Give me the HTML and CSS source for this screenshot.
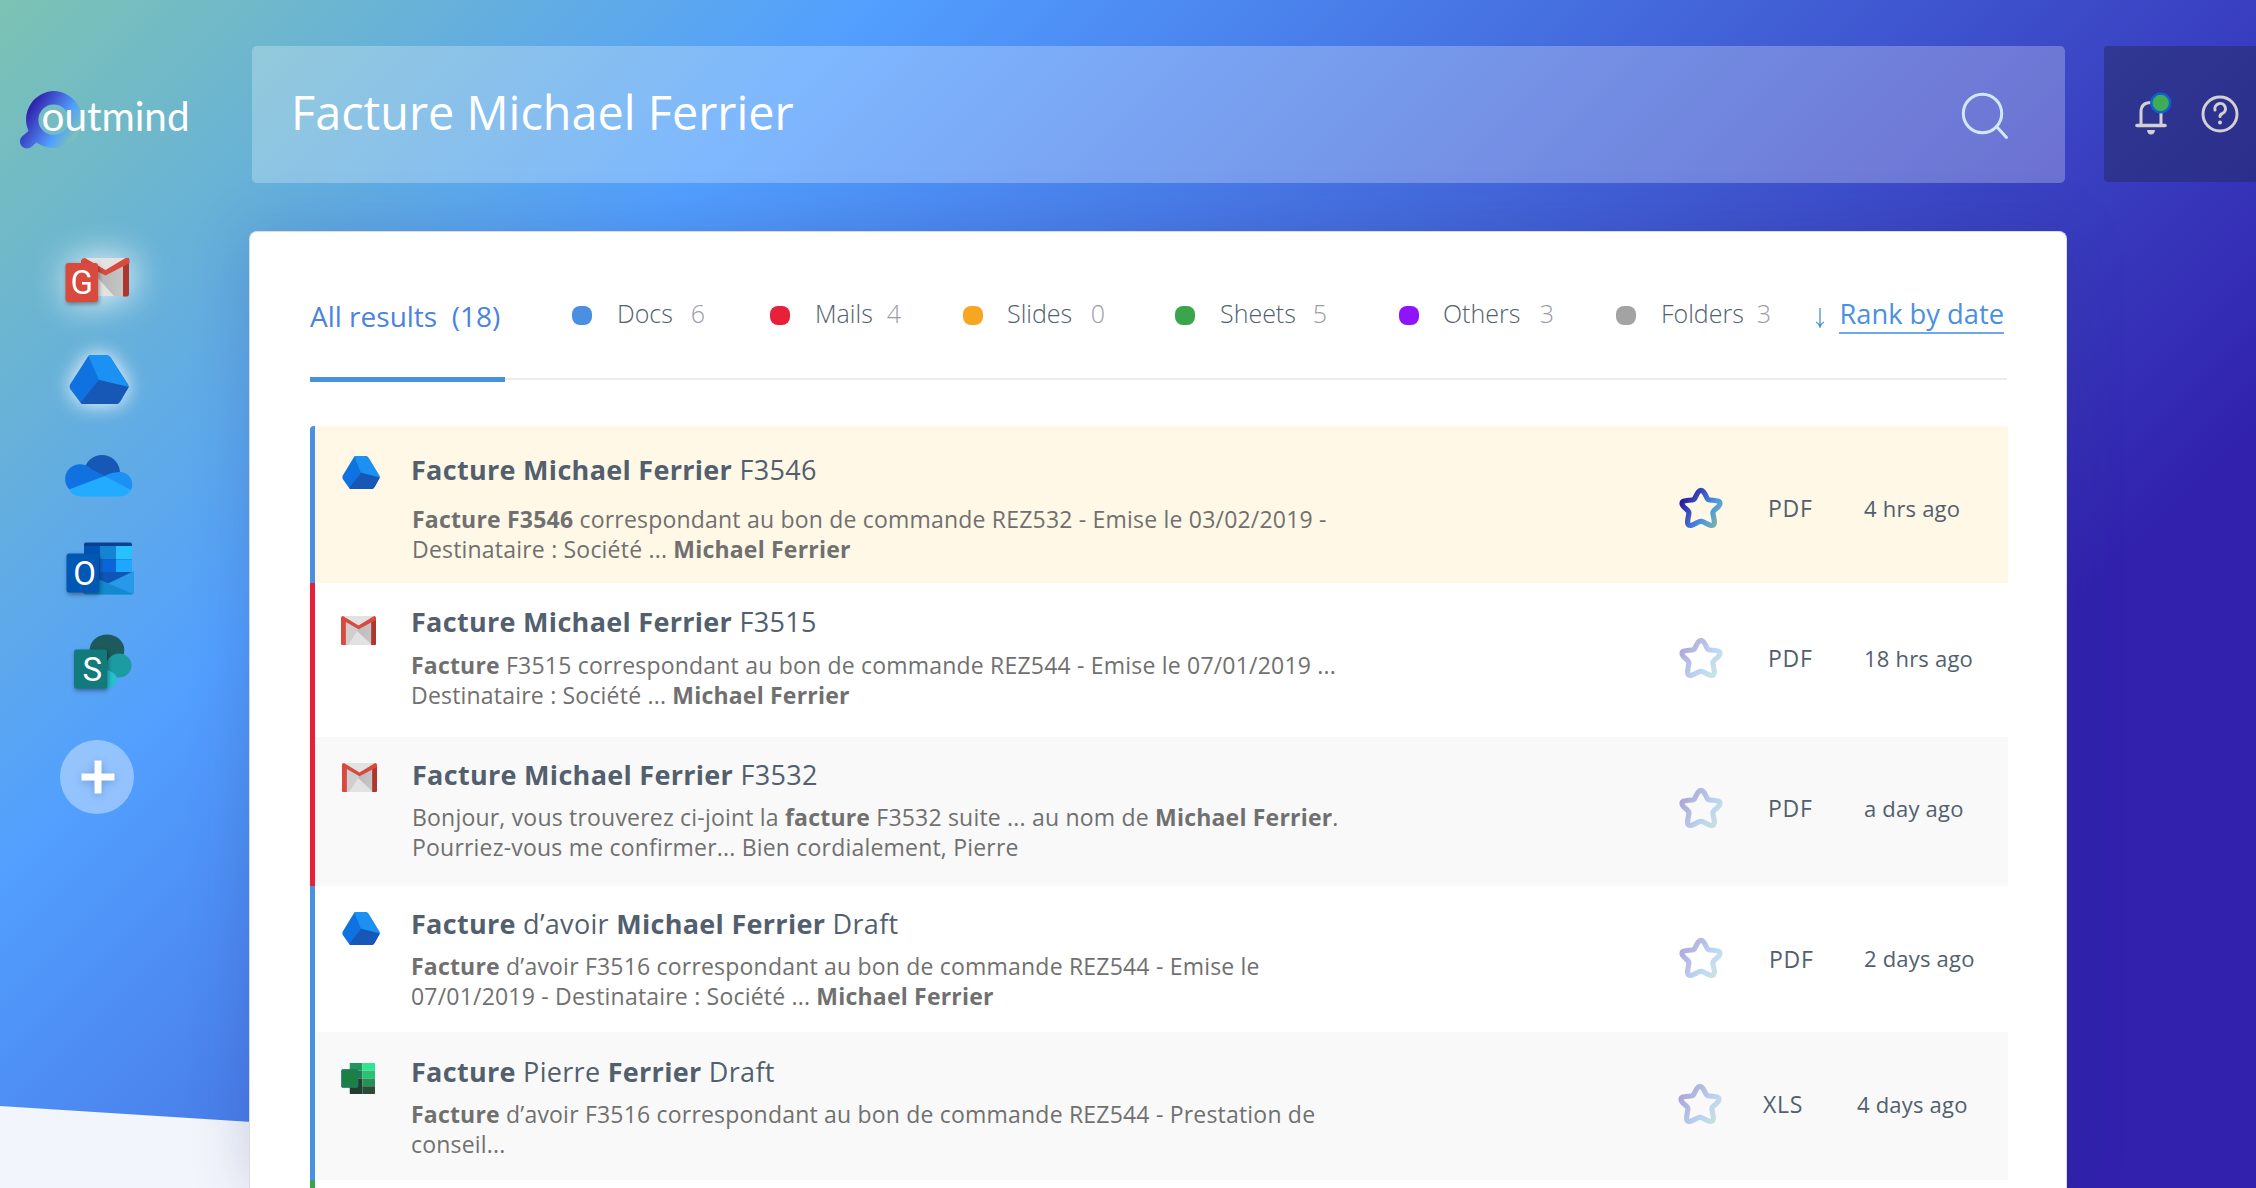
FILE: index.html
```html
<!DOCTYPE html>
<html lang="fr">
<head>
<meta charset="utf-8">
<title>Outmind</title>
<link rel="stylesheet" href="styles.css">
</head>
<body>
<svg width="0" height="0" class="defs" aria-hidden="true">
  <defs>
    <linearGradient id="star-grad" x1="0" y1="0.3" x2="1" y2="0.9">
      <stop offset="0" stop-color="#2a1a9e"/><stop offset="0.65" stop-color="#4c96e6"/><stop offset="1" stop-color="#78b8a0"/>
    </linearGradient>
    <linearGradient id="env" x1="0" y1="0" x2="1" y2="0">
      <stop offset="0" stop-color="#b4b4b4"/><stop offset="1" stop-color="#c6c6c6"/>
    </linearGradient>
    <symbol id="drive" viewBox="0 0 60 49" preserveAspectRatio="none">
      <path d="M19 1.5Q20 0 22 0H37Q40 0 42 3L59 29.5Q60 31.5 59 33L51.500 46Q50 49 46.500 49H14Q12 49 11 47L1.200 34Q0 31.500 1 29.500Z" fill="#1072e0"/>
      <path d="M19.500 1Q20 0 22 0H37Q40 0 42 3L59 29.500Q59.800 31 59.800 32L30 25Z" fill="#1b91f3"/>
      <path d="M30 25L59.800 32L51.500 46Q50 49 46.500 49H14Q12.500 49 11.500 47.500Z" fill="#1757b5"/>
    </symbol>
    <symbol id="gmail" viewBox="0 0 36 32" preserveAspectRatio="none">
      <path d="M1 0H35V32H1Z" fill="#e2e2e2"/>
      <path d="M4 4L32 32H31V4L18 14Z" fill="url(#env)"/>
      <path d="M4 5L18 14L8 32H4Z" fill="#cfcfcf"/>
      <path d="M15 20L25 32H7Z" fill="#e2e2e2"/>
      <path d="M31 5L36 2V31Q36 32 35 32H31Z" fill="#ad372e"/>
      <path d="M0 2Q0 0 2 0L18 10.500L34 0Q36 0 36 2V4.500L18 14.500L5 6.500V32H1Q0 32 0 31Z" fill="#d84a3d"/>
    </symbol>
    <symbol id="star" viewBox="0 0 44 42">
      <path d="M22 3.400C24 3.400 25.300 5.200 28 11Q28.800 12.800 31 13C38.500 13.700 41 14 41 16.500C41 19 38.500 20.500 35 23.500Q33.500 25 34 27C35.500 34 36 36.500 34.500 38C32.500 39.500 29.500 37.500 24.500 35Q22 33.800 19.500 35C14.500 37.500 11.500 39.500 9.500 38C8 36.500 8.500 34 9.800 27Q10.300 25 8.800 23.500C5.500 20.500 3 19 3 16.500C3 14 5.500 13.700 13 13Q15.200 12.800 16 11C18.700 5.200 20 3.400 22 3.400Z" fill="none" stroke="url(#star-grad)" stroke-width="5.200" stroke-linejoin="round"/>
    </symbol>
    <symbol id="excel" viewBox="0 0 36 36" preserveAspectRatio="none">
      <path d="M9 0H22V9H9Z" fill="#21965a"/><path d="M22 0H34Q35 0 35 1V9H22Z" fill="#33e48f"/>
      <path d="M9 9H22V18H9Z" fill="#1f7f49"/><path d="M22 9H35V18H22Z" fill="#2bc078"/>
      <path d="M9 18H22V36H10Q9 36 9 35Z" fill="#213f2c"/><path d="M22 18H35V27H22Z" fill="#259159"/>
      <path d="M22 27H35V35Q35 36 34 36H22Z" fill="#294d36"/>
      <rect x="0.500" y="7.500" width="17" height="21" rx="1.500" fill="#1c8043" stroke="#2a6f8f" stroke-width="0.800"/>
    </symbol>
  </defs>
</svg>

<div class="app">
  <aside class="sidebar">
    <svg class="logo" width="180" height="64" viewBox="0 0 180 64">
      <defs>
        <linearGradient id="ring" x1="0.100" y1="0.300" x2="0.950" y2="0.800">
          <stop offset="0.050" stop-color="#3122ad"/><stop offset="0.650" stop-color="#529fff"/><stop offset="0.950" stop-color="#7cc3b3"/>
        </linearGradient>
      </defs>
      <path fill="url(#ring)" fill-rule="evenodd" d="M39 3A28.500 28.500 0 1 1 21.500 54.500L17 58.500A6.500 6.500 0 0 1 7 48.500L13.500 43A28.500 28.500 0 0 1 39 3ZM38.700 16.500A15.300 15.300 0 1 0 38.700 47.100A15.300 15.300 0 1 0 38.700 16.500Z"/>
      <text x="26.500" y="42.500" textLength="148" lengthAdjust="spacingAndGlyphs" class="logo-text">outmind</text>
    </svg>
    <nav class="sources">
      <svg class="src src-gmail" width="66" height="46" viewBox="0 0 66 46">
        <path d="M18 1H62V39H18Z" fill="#e2e2e2"/>
        <path d="M32 13L40 17L58 5V39H49L32 20Z" fill="url(#env)"/>
        <path d="M58 4L64 1V37Q64 39.500 62 39.500H58Z" fill="#ad372e"/>
        <path d="M16 3.500Q17 .5 20 1L40.500 13L60.500 1Q63 0 64.500 2.500V6L40.500 18.500L16 6Z" fill="#d84a3d"/>
        <rect x="0.500" y="6" width="32.500" height="39" rx="3" fill="#d84a3d" class="tile"/>
        <text x="16.700" y="37" class="tile-letter">G</text>
      </svg>
      <svg class="src src-drive" width="60" height="49"><use href="#drive"/></svg>
      <svg class="src src-onedrive" width="67" height="40" viewBox="0 0 67 40">
        <path d="M18 15A18 18 0 0 1 54 17L40 25Z" fill="#1757b5"/>
        <path d="M3 32A14.500 14.500 0 0 1 25 12L39 19L22 33Z" fill="#1072e0"/>
        <path d="M38.500 19Q44 15.500 53 15A12.500 12.500 0 0 1 65 33L50 31Z" fill="#1b91f3"/>
        <path d="M38.500 19L65 33Q61 39.500 54 39.500H15Q7 39.500 3 32.500Z" fill="#22abff"/>
      </svg>
      <svg class="src src-outlook" width="69" height="54" viewBox="0 0 69 54">
        <rect x="18" y="0.500" width="48" height="34" rx="2" fill="#0a3f91"/>
        <path d="M18 4H34V30H18Z" fill="#0053b4"/><path d="M34 4H50V17.500H34Z" fill="#1584d4"/><path d="M50 4H66V17.500H50Z" fill="#28c0ff"/>
        <path d="M34 17.500H50V30H34Z" fill="#0a66d6"/><path d="M50 17.500H66V30H50Z" fill="#1fa6ff"/>
        <path d="M32 30H68L60 38L43 44L32 38Z" fill="#1055b5"/>
        <path d="M68 29V50Q68 52.500 66 52.500H30L42 41.500Z" fill="#2699e8"/>
        <path d="M32 37L67 52Q66 52.500 65 52.500H20Q17 52.500 17 49Z" fill="#128ad0"/>
        <rect x="0.500" y="11.500" width="32.500" height="39" rx="2.500" fill="#0058b4" class="tile"/>
        <text x="18.500" y="42.500" class="tile-letter">O</text>
      </svg>
      <svg class="src src-sharepoint" width="58" height="56" viewBox="0 0 58 56">
        <ellipse cx="33" cy="16" rx="17.300" ry="15.500" fill="#1d5a5c"/>
        <ellipse cx="45" cy="31.500" rx="12.500" ry="12" fill="#1c9ba2"/>
        <ellipse cx="32" cy="45.500" rx="11" ry="9" fill="#26c0ce"/>
        <rect x="0" y="15.500" width="33" height="39" rx="2.500" fill="#137a7c" class="tile"/>
        <text x="18.300" y="47" class="tile-letter">S</text>
      </svg>
      <button class="add" aria-label="Ajouter"><svg width="34" height="34" viewBox="0 0 34 34"><path d="M13.500 0.500h7v13h13v7h-13v13h-7v-13h-13v-7h13z" fill="#fff"/></svg></button>
    </nav>
  </aside>

  <main class="main">
    <div class="search">
      <span class="query">Facture Michael Ferrier</span>
      <svg width="48" height="48" viewBox="0 0 48 48" fill="none" stroke="#d5e6ff" stroke-width="3" stroke-linecap="round"><circle cx="21.500" cy="21.500" r="19.200"/><path d="M35.500 34.500L45.500 45.500"/></svg>
    </div>

    <section class="panel">
      <div class="tabs">
        <span class="tab tab-all">All results&nbsp; (18)</span>
        <span class="tab docs"><i class="dot"></i>Docs<b>6</b></span>
        <span class="tab mails"><i class="dot"></i>Mails<b>4</b></span>
        <span class="tab slides"><i class="dot"></i>Slides<b>0</b></span>
        <span class="tab sheets"><i class="dot"></i>Sheets<b>5</b></span>
        <span class="tab others"><i class="dot"></i>Others<b>3</b></span>
        <span class="tab folders"><i class="dot"></i>Folders<b>3</b></span>
        <span class="rank"><svg width="10" height="20" viewBox="0 0 10 20" fill="none" stroke="#4a90e2" stroke-width="1.300"><path d="M5 0V18.500M1 14Q4 15.500 5 19Q6 15.500 9 14"/></svg><a>Rank by date</a></span>
      </div>

      <div class="results">
        <article class="row row-1 is-top bar-blue">
          <svg class="kind" width="38" height="33"><use href="#drive"/></svg>
          <div class="text"><h2><b>Facture Michael Ferrier</b> F3546</h2>
            <p><b>Facture F3546</b> correspondant au bon de commande REZ532 - Emise le 03/02/2019 -<br>Destinataire : Société ... <b>Michael Ferrier</b></p></div>
          <svg class="star" width="44" height="42"><use href="#star"/></svg><span class="type">PDF</span><time>4 hrs ago</time>
        </article>
        <article class="row row-2 bar-red">
          <svg class="kind" width="35" height="29"><use href="#gmail"/></svg>
          <div class="text"><h2><b>Facture Michael Ferrier</b> F3515</h2>
            <p><b>Facture</b> F3515 correspondant au bon de commande REZ544 - Emise le 07/01/2019 ...<br>Destinataire : Société ... <b>Michael Ferrier</b></p></div>
          <svg class="star" width="44" height="42"><use href="#star"/></svg><span class="type">PDF</span><time>18 hrs ago</time>
        </article>
        <article class="row row-3 is-alt bar-red">
          <svg class="kind" width="35" height="29"><use href="#gmail"/></svg>
          <div class="text"><h2><b>Facture Michael Ferrier</b> F3532</h2>
            <p>Bonjour, vous trouverez ci-joint la <b>facture</b> F3532 suite ... au nom de <b>Michael Ferrier</b>.<br>Pourriez-vous me confirmer... Bien cordialement, Pierre</p></div>
          <svg class="star" width="44" height="42"><use href="#star"/></svg><span class="type">PDF</span><time>a day ago</time>
        </article>
        <article class="row row-4 bar-blue">
          <svg class="kind" width="38" height="33"><use href="#drive"/></svg>
          <div class="text"><h2><b>Facture</b> d’avoir <b>Michael Ferrier</b> Draft</h2>
            <p><b>Facture</b> d’avoir F3516 correspondant au bon de commande REZ544 - Emise le<br>07/01/2019 - Destinataire : Société ... <b>Michael Ferrier</b></p></div>
          <svg class="star" width="44" height="42"><use href="#star"/></svg><span class="type">PDF</span><time>2 days ago</time>
        </article>
        <article class="row row-5 is-alt bar-blue">
          <svg class="kind" width="35" height="31"><use href="#excel"/></svg>
          <div class="text"><h2><b>Facture</b> Pierre <b>Ferrier</b> Draft</h2>
            <p><b>Facture</b> d’avoir F3516 correspondant au bon de commande REZ544 - Prestation de<br>conseil...</p></div>
          <svg class="star" width="44" height="42"><use href="#star"/></svg><span class="type">XLS</span><time>4 days ago</time>
        </article>
        <article class="row row-6 bar-green"></article>
      </div>
    </section>
  </main>

  <aside class="account">
    <div class="actions">
      <svg width="40" height="46" viewBox="0 0 40 46" fill="none"><path d="M8 35V22Q8 12.500 18 12.500Q28 12.500 28 22V35" stroke="#d2d0d0" stroke-width="3"/><path d="M4 35.500H32" stroke="#d2d0d0" stroke-width="3.600" stroke-linecap="round"/><path d="M14 40H22Q21.500 44.500 18 44.500Q14.500 44.500 14 40Z" fill="#d2d0d0"/><circle cx="27.700" cy="13" r="9.400" fill="#3fae52" stroke="#0a62d4" stroke-width="2.400"/></svg>
      <svg width="38" height="38" viewBox="0 0 38 38" fill="none" stroke="#d2d0d0" stroke-width="3" stroke-linecap="round"><circle cx="19" cy="19" r="17"/><path d="M14 15A5.300 5.300 0 1 1 21.500 18.500Q19 19.500 19 21.500"/><circle cx="19" cy="27.500" r="2" fill="#d2d0d0" stroke="none"/></svg>
    </div>
  </aside>
</div>
</body>
</html>
```
FILE: styles.css
```css
* { box-sizing: border-box; }

body {
  margin: 0;
  width: 2256px;
  height: 1188px;
  overflow: hidden;
  background: #f2f5fb;
  font-family: "Open Sans", "Noto Sans", sans-serif;
  color: #525f6e;
}

.defs { position: absolute; }

.app {
  display: flex;
  height: 1188px;
  overflow: hidden;
  isolation: isolate;
  position: relative;
}

/* slanted gradient backdrop */
.app::before {
  content: "";
  position: absolute;
  inset: 0;
  z-index: -1;
  background: linear-gradient(135deg, #7cc3b3 0, #529fff 622px, #3121ad 1900px);
  clip-path: polygon(0 0, 100% 0, 100% 100%, 1290px 100%, 0 1106px);
}

/* ---------- sidebar ---------- */
.sidebar { width: 249px; flex: none; }
.logo { display: block; margin: 88px 0 0 15px; }
.logo-text { font-family: Lato, sans-serif; font-size: 41px; fill: #fff; }

.sources { display: flex; flex-direction: column; }
.src { display: block; overflow: visible; }
.src-gmail { margin: 105px 0 0 65px; filter: drop-shadow(3px 0 18px rgba(255, 255, 255, .95)); }
.src-drive { margin: 52px 0 0 69px; filter: drop-shadow(0 0 10px rgba(255, 255, 255, 1)); }
.src-onedrive { margin: 53px 0 0 66px; }
.src-outlook { margin: 45px 0 0 66px; }
.src-sharepoint { margin: 38px 0 0 74px; }
.tile { filter: drop-shadow(1px 2px 2px rgba(0, 0, 0, .4)); }
.tile-letter { font-family: Roboto, sans-serif; font-size: 33px; fill: #fff; text-anchor: middle; }
.add {
  display: grid;
  place-items: center;
  width: 74px;
  height: 74px;
  margin: 50px 0 0 60px;
  padding: 0 0 0 1px;
  border: 0;
  border-radius: 50%;
  background: rgba(255, 255, 255, .38);
}
.add svg { filter: drop-shadow(0 2px 4px rgba(40, 80, 160, .35)); }

/* ---------- search ---------- */
.main { width: 1818px; flex: none; padding-top: 46px; }
.search {
  display: flex;
  align-items: flex-start;
  justify-content: space-between;
  width: 1813px;
  height: 137px;
  margin-left: 3px;
  padding: 46px 56px 0 39px;
  border-radius: 5px;
  background: rgba(255, 255, 255, .26);
}
.query { margin-top: -11px; font-size: 46.800px; line-height: 62px; color: #fff; }

/* ---------- panel ---------- */
.panel {
  height: 957px;
  margin-top: 48px;
  padding: 0 60px;
  border-radius: 8px 8px 0 0;
  background: #fff;
  border: 1px solid #d8dcea;
  border-bottom: 0;
  box-shadow: 0 0 60px rgba(40, 50, 120, .2);
}
.tabs {
  display: flex;
  position: relative;
  width: 1697px;
  height: 148px;
  padding-top: 61px;
  border-bottom: 2px solid #ececee;
}
.tabs::after {
  content: "";
  position: absolute;
  left: 0;
  bottom: -4px;
  width: 195px;
  height: 5px;
  background: #4a90e2;
}
.tab {
  display: flex;
  font-size: 25px;
  font-weight: 300;
  line-height: 40px;
  color: #525f6e;
}
.tab b { margin-left: auto; font-weight: 300; color: #9b9ba9; }
.tab-all { width: 262px; margin-top: 3px; font-size: 28px; font-weight: 400; color: #4a83e2; }
.dot { width: 20px; height: 19px; margin: 13px 25px 0 0; border-radius: 8px; background: currentColor; }
.docs { width: 133px; margin-right: 65px; }
.mails { width: 131px; margin-right: 62px; }
.slides { width: 142px; margin-right: 70px; }
.sheets { width: 152px; margin-right: 72px; }
.others { width: 155px; margin-right: 62px; }
.folders { width: 155px; }
.slides .dot, .others .dot { margin-right: 24px; }
.docs .dot { background: #4a90e2; }
.mails .dot { background: #e8203a; }
.slides .dot { background: #f5a623; }
.sheets .dot { background: #3aa54b; }
.others .dot { background: #9013fe; }
.folders .dot { background: #a3a3a3; }
.rank { display: flex; margin-top: 1px; margin-left: auto; margin-right: 3px; font-size: 27.300px; line-height: 40px; color: #4a90e2; }
.rank svg { margin: 14px 14px 0 0; }
.rank a { height: 40px; border-bottom: 2px solid #6ea8ec; }

/* ---------- results ---------- */
.results { width: 1698px; margin-top: 46px; }
.row {
  display: grid;
  grid-template-columns: 96px 1268px 89px 96px 1fr;
  border-left: 5px solid;
}
.is-top { background: #fff8e7; }
.is-alt { background: #f9f9f9; }
.bar-blue { border-left-color: #4a90e2; }
.bar-red { border-left-color: #e8203a; }
.bar-green { border-left-color: #3aa54b; }
.row-1 { height: 157px; --title: 25px; --gap: 15px; --icon: 30px; --meta: 72px; --icon-x: 27px; border-top-left-radius: 4px; }
.row-2 { height: 154px; --title: 20px; --gap: 9px; --icon: 33px; --meta: 65px; }
.row-3 { height: 149px; --title: 19px; --gap: 8px; --icon: 26px; --meta: 61px; --icon-x: 27px; }
.row-4 { height: 146px; --title: 19px; --gap: 8px; --icon: 26px; --meta: 62px; --icon-x: 27px; }
.row-5 { height: 148px; --title: 21px; --gap: 8px; --icon: 31px; --meta: 62px; }
.row-6 { height: 8px; }
.kind { margin: var(--icon) 0 0 var(--icon-x, 26px); }
.text { padding-top: var(--title); }
.row-3 .text { padding-left: 1px; }
.row-1 p { padding-left: 1px; }
h2 { margin: 0 0 var(--gap); font-size: 27px; font-weight: 400; line-height: 38px; letter-spacing: .3px; }
p { margin: 0; font-size: 23px; line-height: 30px; color: #707070; white-space: nowrap; letter-spacing: .2px; }
.star { margin: calc(var(--meta) - 11px) 0 0; }
.row:not(.is-top) .star { opacity: .36; }
.type, time { margin-top: var(--meta); line-height: 20px; }
.type { font-size: 23px; letter-spacing: .7px; }
time { font-size: 22px; letter-spacing: .2px; }
.row-4 .type { padding: 1px 0 0 1px; }
.row-5 .star { margin-left: -1px; }
.row-5 .type { margin-left: -5px; }
.row-5 time { margin-left: -7px; }

/* ---------- account ---------- */
.account { flex: 1; padding: 46px 0 0 37px; }
.actions {
  display: flex;
  height: 136px;
  padding: 44px 0 0 29px;
  gap: 28px;
  border-radius: 4px 0 0 4px;
  background: rgba(36, 41, 96, .5);
}
.actions svg:last-child { margin-top: 5px; }
```
